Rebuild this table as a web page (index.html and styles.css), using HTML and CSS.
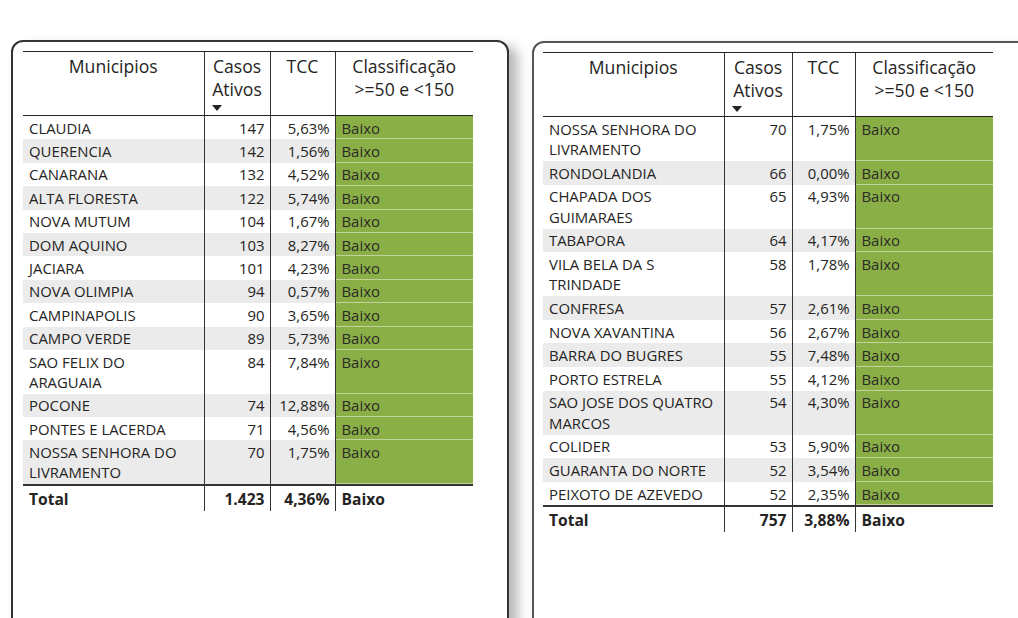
FILE: index.html
```html
<!DOCTYPE html>
<html lang="pt">
<head>
<meta charset="utf-8">
<title>Municipios - Casos Ativos</title>
<link rel="stylesheet" href="styles.css">
</head>
<body>
<div class="page">
  <section class="card card-left">
    <table class="grid grid-left">
      <colgroup><col class="c-mun"><col class="c-casos"><col class="c-tcc"><col class="c-class"></colgroup>
      <thead>
        <tr>
          <th>Municipios</th>
          <th class="h-casos">Casos<br>Ativos<span class="sort"></span></th>
          <th>TCC</th>
          <th>Classificação<br>&gt;=50 e &lt;150</th>
        </tr>
      </thead>
      <tbody>
        <tr><td>CLAUDIA</td><td class="num">147</td><td class="num">5,63%</td><td class="cls">Baixo</td></tr>
        <tr><td>QUERENCIA</td><td class="num">142</td><td class="num">1,56%</td><td class="cls">Baixo</td></tr>
        <tr><td>CANARANA</td><td class="num">132</td><td class="num">4,52%</td><td class="cls">Baixo</td></tr>
        <tr><td>ALTA FLORESTA</td><td class="num">122</td><td class="num">5,74%</td><td class="cls">Baixo</td></tr>
        <tr><td>NOVA MUTUM</td><td class="num">104</td><td class="num">1,67%</td><td class="cls">Baixo</td></tr>
        <tr><td>DOM AQUINO</td><td class="num">103</td><td class="num">8,27%</td><td class="cls">Baixo</td></tr>
        <tr><td>JACIARA</td><td class="num">101</td><td class="num">4,23%</td><td class="cls">Baixo</td></tr>
        <tr><td>NOVA OLIMPIA</td><td class="num">94</td><td class="num">0,57%</td><td class="cls">Baixo</td></tr>
        <tr><td>CAMPINAPOLIS</td><td class="num">90</td><td class="num">3,65%</td><td class="cls">Baixo</td></tr>
        <tr><td>CAMPO VERDE</td><td class="num">89</td><td class="num">5,73%</td><td class="cls">Baixo</td></tr>
        <tr><td>SAO FELIX DO<br>ARAGUAIA</td><td class="num">84</td><td class="num">7,84%</td><td class="cls">Baixo</td></tr>
        <tr><td>POCONE</td><td class="num">74</td><td class="num">12,88%</td><td class="cls">Baixo</td></tr>
        <tr><td>PONTES E LACERDA</td><td class="num">71</td><td class="num">4,56%</td><td class="cls">Baixo</td></tr>
        <tr><td>NOSSA SENHORA DO<br>LIVRAMENTO</td><td class="num">70</td><td class="num">1,75%</td><td class="cls">Baixo</td></tr>
      </tbody>
      <tfoot>
        <tr><td>Total</td><td class="num">1.423</td><td class="num">4,36%</td><td>Baixo</td></tr>
      </tfoot>
    </table>
  </section>

  <section class="card card-right">
    <table class="grid grid-right">
      <colgroup><col class="c-mun"><col class="c-casos"><col class="c-tcc"><col class="c-class"></colgroup>
      <thead>
        <tr>
          <th>Municipios</th>
          <th class="h-casos">Casos<br>Ativos<span class="sort"></span></th>
          <th>TCC</th>
          <th>Classificação<br>&gt;=50 e &lt;150</th>
        </tr>
      </thead>
      <tbody>
        <tr><td>NOSSA SENHORA DO<br>LIVRAMENTO</td><td class="num">70</td><td class="num">1,75%</td><td class="cls">Baixo</td></tr>
        <tr><td>RONDOLANDIA</td><td class="num">66</td><td class="num">0,00%</td><td class="cls">Baixo</td></tr>
        <tr><td>CHAPADA DOS<br>GUIMARAES</td><td class="num">65</td><td class="num">4,93%</td><td class="cls">Baixo</td></tr>
        <tr><td>TABAPORA</td><td class="num">64</td><td class="num">4,17%</td><td class="cls">Baixo</td></tr>
        <tr><td>VILA BELA DA S<br>TRINDADE</td><td class="num">58</td><td class="num">1,78%</td><td class="cls">Baixo</td></tr>
        <tr><td>CONFRESA</td><td class="num">57</td><td class="num">2,61%</td><td class="cls">Baixo</td></tr>
        <tr><td>NOVA XAVANTINA</td><td class="num">56</td><td class="num">2,67%</td><td class="cls">Baixo</td></tr>
        <tr><td>BARRA DO BUGRES</td><td class="num">55</td><td class="num">7,48%</td><td class="cls">Baixo</td></tr>
        <tr><td>PORTO ESTRELA</td><td class="num">55</td><td class="num">4,12%</td><td class="cls">Baixo</td></tr>
        <tr><td>SAO JOSE DOS QUATRO<br>MARCOS</td><td class="num">54</td><td class="num">4,30%</td><td class="cls">Baixo</td></tr>
        <tr><td>COLIDER</td><td class="num">53</td><td class="num">5,90%</td><td class="cls">Baixo</td></tr>
        <tr><td>GUARANTA DO NORTE</td><td class="num">52</td><td class="num">3,54%</td><td class="cls">Baixo</td></tr>
        <tr><td>PEIXOTO DE AZEVEDO</td><td class="num">52</td><td class="num">2,35%</td><td class="cls">Baixo</td></tr>
      </tbody>
      <tfoot>
        <tr><td>Total</td><td class="num">757</td><td class="num">3,88%</td><td>Baixo</td></tr>
      </tfoot>
    </table>
  </section>
</div>
</body>
</html>
```

FILE: styles.css
```css
html, body {
  margin: 0;
  padding: 0;
  background: #ffffff;
  overflow: hidden;
}

body {
  width: 1018px;
  height: 618px;
  font-family: "Open Sans", "Noto Sans", "Liberation Sans", sans-serif;
  color: #252423;
}

.page {
  display: flex;
  align-items: flex-start;
  gap: 23px;
  padding: 40px 0 0 11px;
}

.card {
  flex: 0 0 auto;
  box-sizing: border-box;
  width: 498px;
  height: 620px;
  background: #ffffff;
  border: 2px solid #333333;
  border-radius: 12px;
  padding: 9px 0 0 10px;
  box-shadow: 9px 6px 12px rgba(0, 0, 0, 0.28);
}

.card-right {
  margin-top: 1px;
  border-color: #555555;
  padding-left: 9px;
}

.grid {
  border-collapse: collapse;
  table-layout: fixed;
  width: 450px;
}

.grid-left .c-mun { width: 181px; }
.grid-left .c-casos { width: 66px; }
.grid-left .c-tcc { width: 65px; }
.grid-left .c-class { width: 138px; }

.grid-right .c-mun { width: 181px; }
.grid-right .c-casos { width: 68px; }
.grid-right .c-tcc { width: 63px; }
.grid-right .c-class { width: 138px; }

.grid th {
  border-top: 1px solid #222222;
  border-bottom: 1px solid #222222;
  height: 64px;
  padding: 3px 2px 0;
  box-sizing: border-box;
  vertical-align: top;
  text-align: center;
  font-weight: 400;
  font-size: 17.6px;
  line-height: 23px;
  color: #252423;
  white-space: nowrap;
}

.grid th + th,
.grid td + td {
  border-left: 1px solid #333333;
}

.h-casos {
  position: relative;
}

.sort {
  position: absolute;
  left: 7px;
  bottom: 4px;
  width: 0;
  height: 0;
  border-left: 5px solid transparent;
  border-right: 5px solid transparent;
  border-top: 6px solid #252423;
}

.grid td {
  font-size: 14.9px;
  line-height: 20.4px;
  padding: 1.6px 6px 1.4px 6px;
  vertical-align: top;
  white-space: nowrap;
  overflow: hidden;
}

.grid-right td {
  padding-top: 1.75px;
  padding-bottom: 1.45px;
}

.grid td.num {
  text-align: right;
  padding-right: 5px;
}

.grid tbody tr:nth-child(even) td {
  background: #ebebeb;
}

.grid tbody td.cls,
.grid tbody tr:nth-child(even) td.cls {
  background: #8aaf47;
  box-shadow: inset 0 -1px 0 rgba(255, 255, 255, 0.45);
  color: #2b2a26;
}

.grid tfoot td {
  border-top: 2px solid #333333;
  font-weight: 700;
  font-size: 15.6px;
  line-height: 20px;
  padding-top: 3px;
  padding-bottom: 2px;
}
```
